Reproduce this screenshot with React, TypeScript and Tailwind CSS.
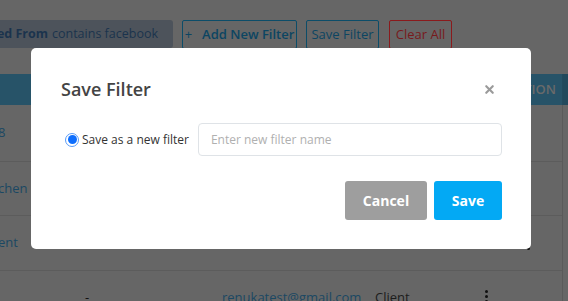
import { X } from 'lucide-react';

const font = "font-['Open_Sans',_'Liberation_Sans',_sans-serif]";

function Dots() {
  return (
    <div className="flex flex-col items-center gap-[2px]">
      <span className="w-[3px] h-[3px] rounded-full bg-[#111]" />
      <span className="w-[3px] h-[3px] rounded-full bg-[#111]" />
      <span className="w-[3px] h-[3px] rounded-full bg-[#111]" />
    </div>
  );
}

export default function App() {
  const rows = [
    { left: '8', h: 'h-[57px]' },
    { left: 'chen', h: 'h-[54px]' },
    { left: 'ent', h: 'h-[55px]' },
  ];

  return (
    <div className={`relative w-[568px] h-[301px] overflow-hidden bg-[#666666] ${font}`}>
      {/* Dimmed page behind the modal */}
      <div className="flex items-start gap-[9px] pt-[20px] h-[74px]">
        <div className="w-[173px] h-[28px] bg-[#4d535b] rounded-r-[3px] flex justify-end items-center overflow-hidden pr-[15px] whitespace-nowrap text-[12.5px] text-[#1b334d]">
          <span className="font-bold">Added From</span>
          <span className="ml-[4px]">contains facebook</span>
        </div>
        <div className="w-[115px] h-[29px] border border-[#0c4d69] rounded-[2px] flex items-center justify-center text-[13px] font-semibold text-[#0c4562] whitespace-nowrap">
          <span className="mr-[10px] font-normal">+</span>Add New Filter
        </div>
        <div className="w-[73px] h-[29px] border border-[#0c4d69] rounded-[2px] flex items-center justify-center text-[13px] text-[#0c4562] whitespace-nowrap">
          Save Filter
        </div>
        <div className="ml-[1px] w-[63px] h-[29px] border border-[#8a1a1c] rounded-[2px] flex items-center justify-center text-[13px] text-[#781a1c] whitespace-nowrap">
          Clear All
        </div>
      </div>

      <div className="h-[31px] flex bg-[#275368]">
        <div className="flex-1 flex items-center justify-end pr-[6px] text-[13px] font-semibold text-[#6a6a6a]">ACTION</div>
        <div className="w-[6px] bg-[#22495c] border-l border-[#234a5d]" />
      </div>

      <div className="flex">
        <div className="flex-1">
          {rows.map((r, i) => (
            <div key={i} className={`${r.h} border-b border-[#5c5c5c] flex items-center text-[13px] text-[#1b4863]`}>
              <span className="w-[500px] -ml-[2px]">{r.left}</span>
              <div className="ml-[29px]">
                <Dots />
              </div>
            </div>
          ))}
          <div className="h-[40px] flex items-start pt-[17px] text-[13px]">
            <span className="w-[85px] text-[#1b4863]" />
            <span className="w-[137px] text-[#111]">-</span>
            <span className="w-[153px] text-[#1b4863]">renukatest@gmail.com</span>
            <span className="w-[110px] text-[#1c1c1c]">Client</span>
            <div className="pt-[2px]">
              <Dots />
            </div>
          </div>
        </div>
        <div className="w-[6px] border-l border-[#5a5a5a]" />
      </div>

      {/* Modal */}
      <div className="absolute left-[31px] top-[48px] w-[500px] bg-white rounded-[5px] pl-[30px] pr-[29px] pt-[28px] pb-[29px]">
        <div className="flex items-center justify-between">
          <h2 className="text-[18px] leading-[26px] font-semibold text-[#444]">Save Filter</h2>
          <X className="w-[13px] h-[13px] text-[#9a9a9a] mr-[6px]" strokeWidth={4} />
        </div>

        <div className="flex items-center mt-[21px]">
          <div className="flex items-center pl-[4px]">
            <span className="w-[14px] h-[14px] rounded-full border border-[#5a9cf8] bg-white flex items-center justify-center">
              <span className="w-[9px] h-[9px] rounded-full bg-[#0d6efd]" />
            </span>
            <span className="ml-[3px] text-[12px] text-[#333]">Save as a new filter</span>
          </div>
          <div className="flex-1 ml-[9px] h-[33px] border border-[#dfe3e7] rounded-[4px] flex items-center px-[12px] text-[12px] text-[#b0b0b0]">
            Enter new filter name
          </div>
        </div>

        <div className="flex justify-end gap-[7px] mt-[25px]">
          <button className="w-[82px] h-[39px] rounded-[3px] bg-[#9e9e9e] text-white text-[14px] font-bold">Cancel</button>
          <button className="w-[68px] h-[39px] rounded-[3px] bg-[#03a9f4] text-white text-[14px] font-bold">Save</button>
        </div>
      </div>
    </div>
  );
}
